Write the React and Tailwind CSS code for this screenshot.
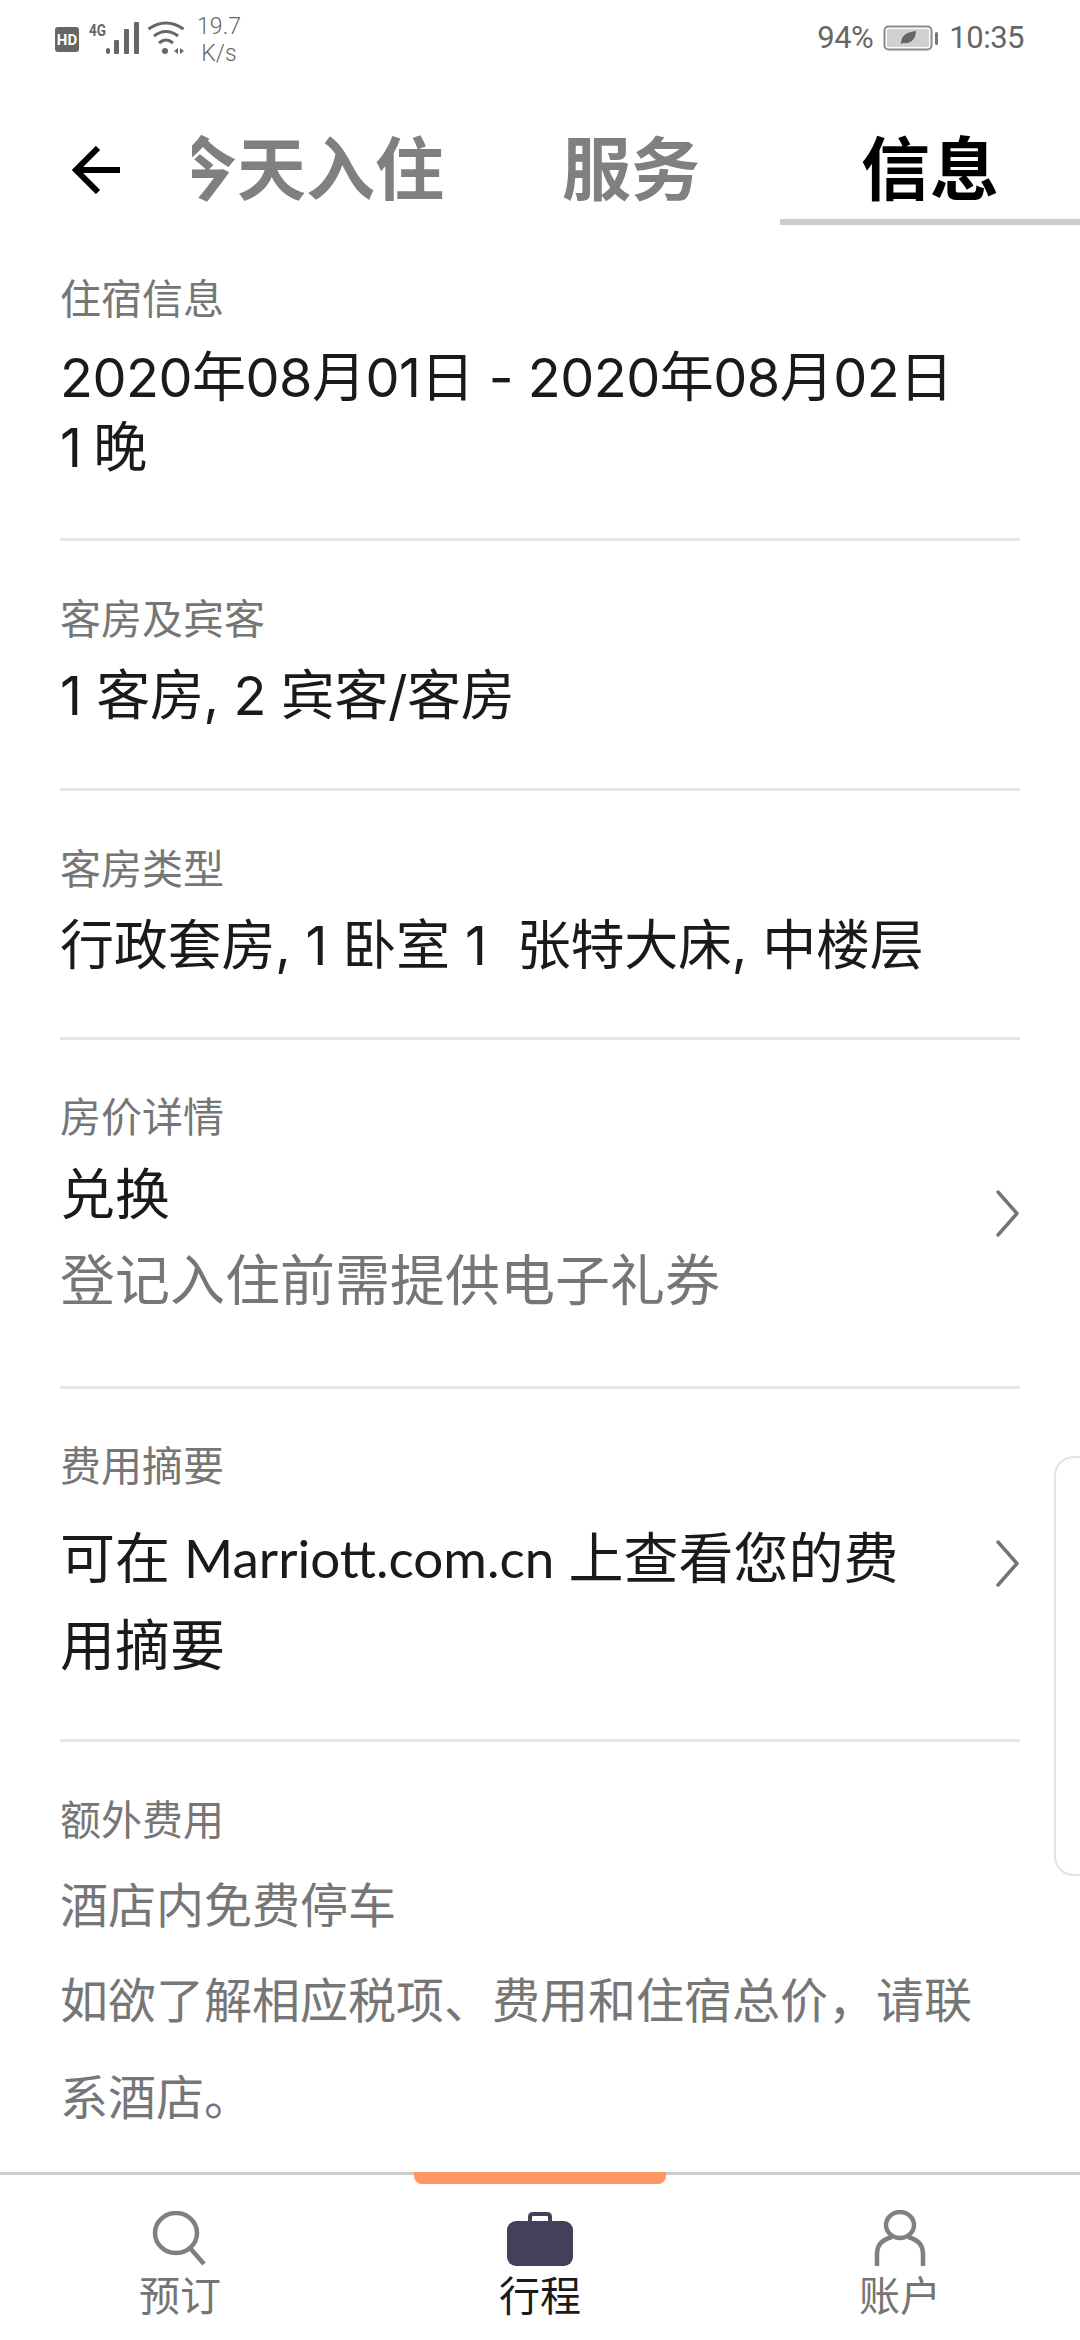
const cjk = { fontFamily: 'Lato,"Noto Sans CJK SC",sans-serif' };
const numeric = { fontFamily: 'Inter,"Noto Sans CJK SC",sans-serif' };

function Chevron({ top }) {
  return (
    <svg width="23" height="47" viewBox="0 0 23 47" className={`shrink-0 mr-[1px] ${top}`} fill="none" stroke="#757575" strokeWidth="3.5" strokeLinecap="round" strokeLinejoin="round">
      <path d="M2 2 L21 23.5 L2 45" />
    </svg>
  );
}

function Section({ label, children, className }) {
  return (
    <section className={`mx-[60px] border-b-[3px] border-[#e6e6e6] ${className}`}>
      <div className="text-[41px] leading-[48px] text-[#767676]">{label}</div>
      {children}
    </section>
  );
}

function StatusBar() {
  return (
    <div className="h-[72px] flex items-start justify-between pl-[54px] pr-[56px] text-[#666666]" style={{ fontFamily: 'Roboto,sans-serif' }}>
      <div className="flex items-start">
        <svg width="132" height="36" viewBox="0 0 132 36" className="mt-[20px]">
          <rect x="1" y="7" width="24" height="25" rx="3" fill="#666" />
          <text x="13" y="25" textAnchor="middle" fontSize="15" fontWeight="700" fill="#fff" fontFamily="Roboto">HD</text>
          <text x="35" y="16" fontSize="17" fontWeight="700" fill="#666" fontFamily="Roboto" textLength="17" lengthAdjust="spacingAndGlyphs">4G</text>
          <rect x="52" y="28" width="4" height="6" rx="2" fill="#666" />
          <rect x="60" y="20" width="5" height="14" rx="1" fill="#666" />
          <rect x="70" y="9" width="5" height="25" rx="1" fill="#666" />
          <rect x="80" y="2" width="5" height="32" rx="1" fill="#666" />
          <g fill="none" stroke="#666" strokeWidth="3">
            <path d="M94.5 9 Q112 -3 129.5 9" />
            <path d="M100 16 Q112 7 124 16" />
            <path d="M105 23 Q112 17 119 23" />
          </g>
          <circle cx="111" cy="31" r="3" fill="#666" />
          <path d="M120 31l4 -3v6z M126 28l4 3 -4 3z" fill="#666" />
        </svg>
        <div className="ml-[11px] mt-[13px] w-[44px] text-center text-[23px] leading-[27px] whitespace-nowrap flex flex-col items-center font-light">
          <span>19.7</span>
          <span>K/s</span>
        </div>
      </div>
      <div className="flex items-center mt-[20px] text-[31px] leading-[36px] tracking-[-0.5px]">
        <span>94%</span>
        <svg width="56" height="30" viewBox="0 0 56 30" className="mx-[10px]">
          <rect x="1.5" y="3.5" width="47" height="23" rx="4" fill="none" stroke="#8a8a8a" strokeWidth="2" />
          <rect x="4" y="6" width="42" height="18" rx="1" fill="#d0d0d0" />
          <path d="M18 21 C18 12 24 9 33 8 C33 16 28 21 20 20 Z" fill="#666" />
          <rect x="52" y="9" width="3" height="13" rx="1.5" fill="#777" />
        </svg>
        <span>10:35</span>
      </div>
    </div>
  );
}

function Header() {
  return (
    <div className="h-[154px] relative">
      <svg width="50" height="48" viewBox="0 0 50 48" className="absolute left-[72px] top-[74px]" fill="none" stroke="#000" strokeWidth="6">
        <path d="M26 2 L4 24 L26 46" />
        <path d="M4 24 H48" />
      </svg>
      <div className="absolute left-[192px] top-[57px] w-[260px] overflow-hidden whitespace-nowrap text-[69px] leading-[80px] font-bold text-[#808080]">
        <span className="-ml-[24px] inline-block">今天入住</span>
      </div>
      <div className="absolute left-[562px] top-[57px] text-[69px] leading-[80px] font-bold text-[#808080]">服务</div>
      <div className="absolute left-[780px] right-0 top-[57px] h-[96px] text-center border-b-[6px] border-[#cccccc] text-[69px] leading-[80px] font-bold text-black">信息</div>
    </div>
  );
}

function Nav() {
  return (
    <nav className="absolute left-0 right-0 bottom-0 h-[168px] bg-white border-t-[3px] border-[#cccccc]">
      <div className="absolute left-[414px] w-[252px] -top-[3px] h-[12px] bg-[#ff9661] rounded-b-[8px]" />
      <div className="grid grid-cols-3 h-full">
        <div className="flex flex-col items-center pt-[36px]">
          <svg width="56" height="56" viewBox="0 0 56 56" fill="none" stroke="#808080" strokeWidth="4.5">
            <ellipse cx="24" cy="22" rx="21" ry="20" />
            <path d="M38 37 L52 53" />
          </svg>
          <span className="text-[41px] leading-[46px] text-[#757575] mt-[6px]">预订</span>
        </div>
        <div className="flex flex-col items-center pt-[37px]">
          <svg width="66" height="54" viewBox="0 0 66 54">
            <path d="M23 10 V5 Q23 2 26 2 H40 Q43 2 43 5 V10" fill="none" stroke="#45405a" strokeWidth="4" />
            <rect x="0" y="9" width="66" height="45" rx="9" fill="#45405a" />
          </svg>
          <span className="text-[41px] leading-[46px] text-[#1a1a1a] mt-[7px]">行程</span>
        </div>
        <div className="flex flex-col items-center pt-[35px]">
          <svg width="52" height="58" viewBox="0 0 52 58" fill="none" stroke="#808080" strokeWidth="4.5">
            <ellipse cx="26" cy="15" rx="14" ry="13" />
            <path d="M3 56 V44 C3 34 10 29 18 27 M49 56 V44 C49 34 42 29 34 27" />
          </svg>
          <span className="text-[41px] leading-[46px] text-[#757575] mt-[5px]">账户</span>
        </div>
      </div>
    </nav>
  );
}

export default function App() {
  return (
    <div className="relative w-[1080px] h-[2340px] bg-white overflow-hidden" style={cjk}>
      <StatusBar />
      <Header />
      <main>
        <Section label="住宿信息" className="pt-[49px] h-[315px]">
          <div style={numeric} className="text-[54px] leading-[70px] tracking-[-0.5px] text-[#1a1a1a] mt-[20px] whitespace-nowrap">2020年08月01日 - 2020年08月02日</div>
          <div style={numeric} className="text-[54px] leading-[70px] tracking-[-2px] text-[#1a1a1a]">1 晚</div>
        </Section>
        <Section label="客房及宾客" className="pt-[54px] h-[250px]">
          <div style={numeric} className="text-[54px] leading-[70px] tracking-[-0.4px] text-[#1a1a1a] mt-[18px]">1 客房, 2 宾客/客房</div>
        </Section>
        <Section label="客房类型" className="pt-[54px] h-[249px]">
          <div style={numeric} className="text-[54px] leading-[70px] tracking-[-0.2px] text-[#1a1a1a] mt-[18px]">行政套房, 1 卧室 1{'\u00a0'} 张特大床, 中楼层</div>
        </Section>
        <Section label="房价详情" className="pt-[53px] h-[349px]">
          <div className="flex items-start justify-between mt-[17px]">
            <div>
              <div className="text-[55px] leading-[70px] text-[#1a1a1a]">兑换</div>
              <div className="text-[55px] leading-[84px] text-[#767676] mt-[9px]">登记入住前需提供电子礼券</div>
            </div>
            <Chevron top="mt-[32px]" />
          </div>
        </Section>
        <Section label="费用摘要" className="pt-[53px] h-[353px]">
          <div className="flex items-start justify-between mt-[24px]">
            <div className="w-[860px] text-[55px] leading-[87px] text-[#1a1a1a]">可在 <span className="text-[53px]">Marriott.com.cn</span> 上查看您的费用摘要</div>
            <Chevron top="mt-[26px]" />
          </div>
        </Section>
        <section className="mx-[60px] pt-[54px]">
          <div className="text-[41px] leading-[48px] text-[#767676]">额外费用</div>
          <div className="text-[48px] leading-[84px] text-[#767676] mt-[19px]">酒店内免费停车</div>
          <div className="w-[930px] text-[48px] leading-[97px] text-[#767676] mt-[4px]">如欲了解相应税项、费用和住宿总价，请联系酒店。</div>
        </section>
      </main>
      <div className="absolute right-0 top-[1456px] w-[26px] h-[420px] border-l-[2px] border-y-[2px] border-[#e2e2e2] rounded-l-[20px]" />
      <Nav />
    </div>
  );
}
